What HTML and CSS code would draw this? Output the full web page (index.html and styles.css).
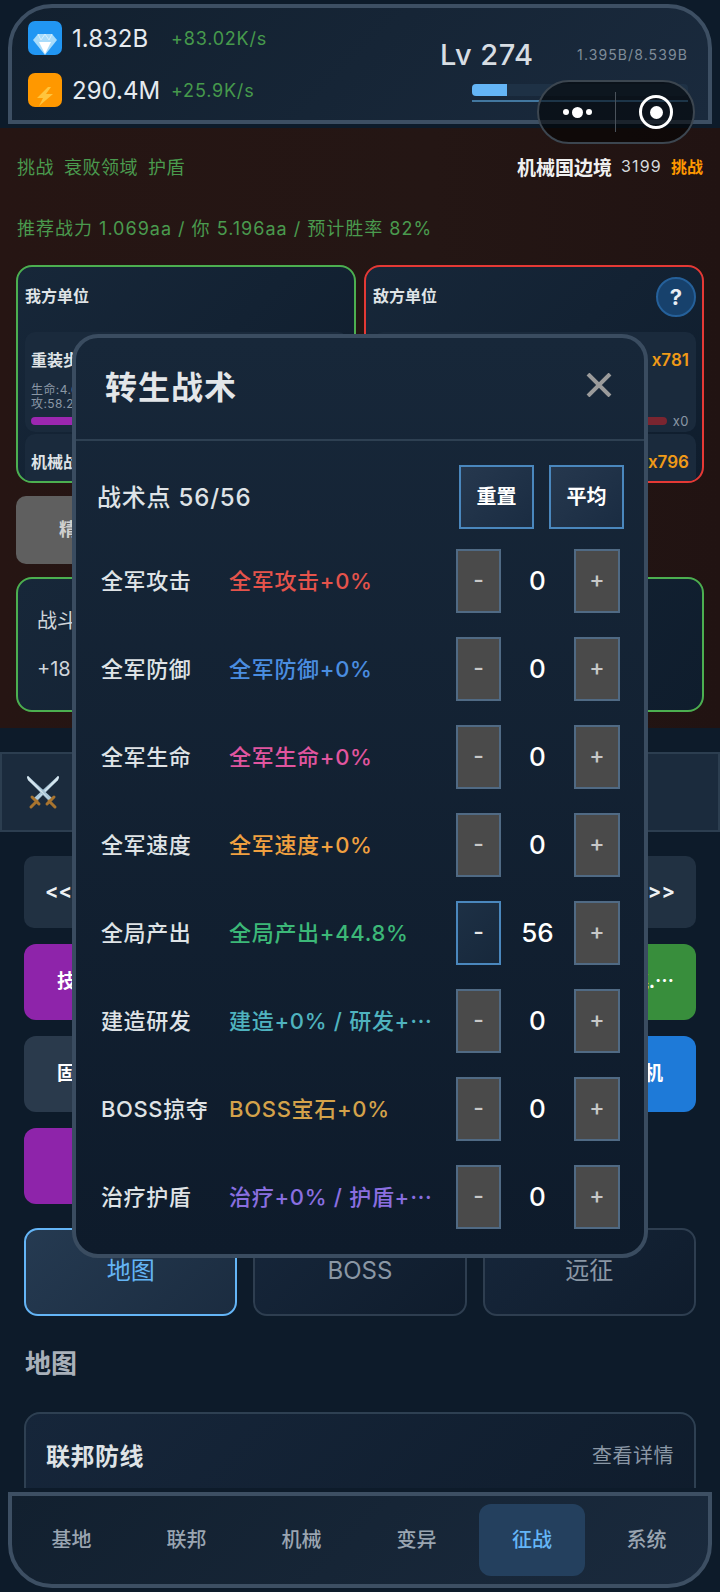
FILE: index.html
```html
<!DOCTYPE html>
<html lang="zh-CN">
<head>
    <meta charset="utf-8">
    <title>转生战术</title>
    <link rel="stylesheet" href="styles.css">
</head>
<body>
<div class="page">
    <header class="top-bar">
        <div class="resources">
            <div class="res-row">
                <span class="res-icon gem">
                    <svg viewBox="0 0 34 34" width="34" height="34">
                        <path d="M5 19 L10 13 L24 13 L29 19 L17 34 Z" fill="#a9dcfb"/>
                        <path d="M11 21 L23 21 L17 33 Z" fill="#ffffff"/>
                        <path d="M10 13 L13 19 L17 13 L21 19 L24 13" fill="none" stroke="#d9f0fd" stroke-width="1"/>
                    </svg>
                </span>
                <span class="res-value">1.832B</span>
                <span class="res-rate">+83.02K/s</span>
            </div>
            <div class="res-row">
                <span class="res-icon bolt">
                    <svg viewBox="0 0 34 34" width="34" height="34">
                        <path d="M20 14 L9 25 L15 25 L11 33 L25 21 L18 21 L23 14 Z" fill="#ffc53d"/>
                    </svg>
                </span>
                <span class="res-value">290.4M</span>
                <span class="res-rate">+25.9K/s</span>
            </div>
        </div>
        <div class="level">
            <div class="level-top">
                <span class="level-num">Lv 274</span>
                <span class="level-xp">1.395B/8.539B</span>
            </div>
            <div class="xp-track"><div class="xp-fill"></div></div>
            <div class="xp-line"></div>
        </div>
    </header>

    <section class="battle">
        <div class="battle-head">
            <div class="tags"><span>挑战</span><span>衰败领域</span><span>护盾</span></div>
            <div class="stage"><b>机械国边境</b><span class="stage-num">3199</span><b class="stage-act">挑战</b></div>
        </div>
        <div class="recommend">推荐战力 1.069aa / 你 5.196aa / 预计胜率 82%</div>
        <div class="sides">
            <div class="side mine">
                <div class="side-title">我方单位</div>
                <div class="unit">
                    <div class="unit-name">重装步兵</div>
                    <div class="unit-stats">生命:4.6aa<br>攻:58.2aa</div>
                    <div class="unit-bar"></div>
                </div>
                <div class="unit unit-short"><div class="unit-name">机械战士</div></div>
            </div>
            <div class="side enemy">
                <div class="side-title">敌方单位</div>
                <div class="help">?</div>
                <div class="unit">
                    <div class="unit-count">x781</div>
                    <div class="enemy-foot"><div class="enemy-bar"></div><span>x0</span></div>
                </div>
                <div class="unit unit-short"><div class="unit-count">x796</div></div>
            </div>
        </div>
        <div class="gray-btn">精英</div>
        <div class="log">
            <div class="log-title">战斗</div>
            <div class="log-line">+18</div>
        </div>
    </section>

    <main class="main">
        <div class="hero-card">
            <svg class="swords" viewBox="0 0 36 36" width="36" height="36">
                <path d="M33 2 L34 3 L33 6 L12 27 L9 24 Z" fill="#a9c6d8"/>
                <path d="M33 2 L34 3 L33 6 L11 26 Z" fill="#d5e5ee"/>
                <path d="M3 2 L2 3 L3 6 L24 27 L27 24 Z" fill="#a9c6d8"/>
                <path d="M3 2 L2 3 L3 6 L25 26 Z" fill="#d5e5ee"/>
                <path d="M7 23 L14 30 M12 27 L6 33" stroke="#a8742f" stroke-width="3" stroke-linecap="round"/>
                <path d="M29 23 L22 30 M24 27 L30 33" stroke="#a8742f" stroke-width="3" stroke-linecap="round"/>
            </svg>
        </div>
        <div class="pager"><span>&lt;&lt;</span><span>&gt;&gt;</span></div>
        <div class="action-row">
            <div class="action purple">技能</div>
            <div class="action green">挑.⋯</div>
        </div>
        <div class="action-row">
            <div class="action slate">固定</div>
            <div class="action blue">战机</div>
        </div>
        <div class="action-row">
            <div class="action purple"></div>
        </div>
        <div class="tabs">
            <div class="tab active">地图</div>
            <div class="tab">BOSS</div>
            <div class="tab">远征</div>
        </div>
        <h2 class="section-title">地图</h2>
        <div class="map-card">
            <span class="map-name">联邦防线</span>
            <span class="map-link">查看详情</span>
        </div>
    </main>

    <nav class="bottom-nav">
        <div class="nav-item">基地</div>
        <div class="nav-item">联邦</div>
        <div class="nav-item">机械</div>
        <div class="nav-item">变异</div>
        <div class="nav-item active">征战</div>
        <div class="nav-item">系统</div>
    </nav>

    <!-- mini program capsule -->
    <div class="capsule">
        <div class="capsule-dots"><i></i><i class="big"></i><i></i></div>
        <div class="capsule-line"></div>
        <div class="capsule-target"><i></i></div>
    </div>

    <div class="modal">
        <div class="modal-head">
            <span class="modal-title">转生战术</span>
            <svg class="modal-close" viewBox="0 0 26 24" width="26" height="24">
                <path d="M2 1 L24 23 M24 1 L2 23" stroke="#9b9b9b" stroke-width="4"/>
            </svg>
        </div>
        <div class="points">
            <span class="points-text">战术点 56/56</span>
            <div class="points-btns">
                <div class="blue-btn">重置</div>
                <div class="blue-btn">平均</div>
            </div>
        </div>
        <div class="tactic">
            <span class="tactic-name">全军攻击</span>
            <span class="tactic-effect c-attack">全军攻击+0%</span>
            <div class="step">-</div><span class="tactic-val">0</span><div class="step plus">+</div>
        </div>
        <div class="tactic">
            <span class="tactic-name">全军防御</span>
            <span class="tactic-effect c-defense">全军防御+0%</span>
            <div class="step">-</div><span class="tactic-val">0</span><div class="step plus">+</div>
        </div>
        <div class="tactic">
            <span class="tactic-name">全军生命</span>
            <span class="tactic-effect c-life">全军生命+0%</span>
            <div class="step">-</div><span class="tactic-val">0</span><div class="step plus">+</div>
        </div>
        <div class="tactic">
            <span class="tactic-name">全军速度</span>
            <span class="tactic-effect c-speed">全军速度+0%</span>
            <div class="step">-</div><span class="tactic-val">0</span><div class="step plus">+</div>
        </div>
        <div class="tactic">
            <span class="tactic-name">全局产出</span>
            <span class="tactic-effect c-output">全局产出+44.8%</span>
            <div class="step on">-</div><span class="tactic-val">56</span><div class="step plus">+</div>
        </div>
        <div class="tactic">
            <span class="tactic-name">建造研发</span>
            <span class="tactic-effect c-build">建造+0% / 研发+⋯</span>
            <div class="step">-</div><span class="tactic-val">0</span><div class="step plus">+</div>
        </div>
        <div class="tactic">
            <span class="tactic-name">BOSS掠夺</span>
            <span class="tactic-effect c-boss">BOSS宝石+0%</span>
            <div class="step">-</div><span class="tactic-val">0</span><div class="step plus">+</div>
        </div>
        <div class="tactic">
            <span class="tactic-name">治疗护盾</span>
            <span class="tactic-effect c-heal">治疗+0% / 护盾+⋯</span>
            <div class="step">-</div><span class="tactic-val">0</span><div class="step plus">+</div>
        </div>
    </div>
</div>
</body>
</html>
```

FILE: styles.css
```css
* {
    box-sizing: border-box;
}
body {
    margin: 0;
    background: #0d1b2a;
    font-family: Inter, "Noto Sans CJK SC", sans-serif;
    color: #e0e6ec;
}
.page {
    position: relative;
    width: 720px;
    height: 1592px;
    display: flex;
    flex-direction: column;
    overflow: hidden;
    background: #0d1b2a;
}

/* top bar */
.top-bar {
    flex: none;
    height: 120px;
    margin: 4px 8px 4px;
    padding: 13px 20px 0 16px;
    display: flex;
    justify-content: space-between;
    border: 4px solid #3d4f63;
    border-radius: 44px 44px 0 0;
    background: linear-gradient(135deg, #12202f, #1a2a3d);
}
.resources {
    display: flex;
    flex-direction: column;
    gap: 18px;
}
.res-row {
    display: flex;
    align-items: center;
    height: 34px;
}
.res-icon {
    width: 34px;
    height: 34px;
    border-radius: 7px;
    overflow: hidden;
}
.res-icon svg {
    display: block;
}
.gem {
    background: #2196f3;
}
.bolt {
    background: #ff9800;
}
.res-value {
    width: 99px;
    margin-left: 10px;
    font-size: 24px;
    color: #e6ebf0;
}
.res-rate {
    font-size: 18px;
    letter-spacing: 0.8px;
    color: #469a4c;
}
.level {
    width: 248px;
    padding-top: 16px;
}
.level-top {
    display: flex;
    justify-content: space-between;
    align-items: center;
}
.level-num {
    font-size: 29px;
    font-weight: 500;
    letter-spacing: 0.5px;
    color: #d7dde3;
}
.level-xp {
    font-size: 14px;
    letter-spacing: 1.1px;
    color: #7f8c99;
}
.xp-track {
    width: 216px;
    height: 12px;
    margin: 12px 0 0 32px;
    border-radius: 4px;
    background: #1e3145;
}
.xp-fill {
    width: 35px;
    height: 12px;
    border-radius: 4px 0 0 4px;
    background: #64b5f6;
}
.xp-line {
    width: 216px;
    height: 2px;
    margin: 4px 0 0 32px;
    background: #42779f;
}

/* battle area */
.battle {
    flex: none;
    height: 600px;
    padding: 0 16px;
    background: linear-gradient(90deg, #261513, #241614 60%, #211312);
}
.battle-head {
    display: flex;
    justify-content: space-between;
    align-items: center;
    height: 24px;
    margin-top: 26px;
}
.tags {
    display: flex;
    gap: 10px;
    margin-left: 1px;
    font-size: 18px;
    letter-spacing: 0.5px;
    color: #4a9a4e;
}
.stage {
    display: flex;
    align-items: center;
    gap: 9px;
    margin-right: 1px;
    font-size: 16px;
    color: #d5d9dc;
}
.stage b:first-child {
    font-size: 19px;
    font-weight: 700;
    color: #f0f0f0;
}
.stage-num {
    letter-spacing: 1.2px;
}
.stage-act {
    color: #ff9800;
}
.recommend {
    margin: 39px 0 0 1px;
    font-size: 18px;
    line-height: 24px;
    letter-spacing: 1px;
    color: #4a9a4e;
}
.sides {
    display: flex;
    gap: 8px;
    margin-top: 24px;
}
.side {
    position: relative;
    width: 340px;
    height: 218px;
    padding: 0 6px 0 7px;
    border: 2px solid;
    border-radius: 16px;
    overflow: hidden;
    background: linear-gradient(135deg, #172739, #0f1d2d);
}
.mine {
    border-color: #4caf50;
}
.enemy {
    border-color: #e53935;
}
.side-title {
    height: 65px;
    padding-top: 17px;
    font-size: 16px;
    font-weight: 700;
    line-height: 24px;
    color: #dfe3e6;
}
.help {
    position: absolute;
    top: 10px;
    right: 6px;
    width: 40px;
    height: 40px;
    border: 2px solid #25609a;
    border-radius: 50%;
    background: #17416c;
    color: #e8eef5;
    font-size: 22px;
    font-weight: 700;
    line-height: 36px;
    text-align: center;
}
.unit {
    height: 100px;
    padding: 15px 7px 0 6px;
    margin-bottom: 2px;
    border-radius: 10px;
    background: #1a2a3c;
}
.unit-short {
    height: 60px;
}
.unit-name {
    font-size: 16px;
    font-weight: 700;
    line-height: 26px;
    color: #dfe3e6;
}
.unit-stats {
    margin-top: 10px;
    font-size: 12px;
    line-height: 14px;
    letter-spacing: 0.4px;
    color: #8a97a5;
}
.unit-bar {
    height: 8px;
    margin-top: 6px;
    border-radius: 4px;
    background: #9c27b0;
}
.unit-count {
    font-size: 17px;
    font-weight: 600;
    line-height: 26px;
    text-align: right;
    color: #f09a17;
}
.enemy-foot {
    display: flex;
    justify-content: space-between;
    align-items: center;
    margin-top: 40px;
    font-size: 13px;
    letter-spacing: 0.5px;
    color: #8a97a5;
}
.enemy-bar {
    width: 288px;
    height: 8px;
    border-radius: 4px;
    background: #7a2530;
}
.gray-btn {
    width: 200px;
    height: 68px;
    margin-top: 13px;
    padding: 0 0 0 43px;
    border-radius: 10px;
    background: #5f5f5f;
    font-size: 18px;
    font-weight: 700;
    line-height: 68px;
    color: #d0d0d0;
}
.log {
    height: 135px;
    margin-top: 13px;
    padding: 26px 19px 0;
    border: 2px solid #4caf50;
    border-radius: 16px;
    background: linear-gradient(135deg, #172739, #0f1d2d);
    font-size: 20px;
    color: #cfd5da;
}
.log-line {
    margin-top: 23px;
}

/* lower page */
.main {
    flex: 1;
    min-height: 0;
    margin-bottom: 4px;
    overflow: hidden;
    padding: 0 24px;
}
.hero-card {
    display: flex;
    align-items: center;
    height: 80px;
    margin: 24px -24px 0;
    padding-left: 23px;
    border: 2px solid #2c3e50;
    background: #1b2b3d;
}
.pager {
    display: flex;
    justify-content: space-between;
    height: 72px;
    margin-top: 24px;
    padding: 0 21px;
    border-radius: 10px;
    background: #213142;
    font-size: 20px;
    font-weight: 700;
    line-height: 70px;
    color: #eef1f4;
}
.action-row {
    display: flex;
    justify-content: space-between;
    margin-top: 16px;
}
.action {
    width: 200px;
    height: 76px;
    padding: 0 33px;
    border-radius: 12px;
    font-size: 19px;
    font-weight: 700;
    line-height: 76px;
    color: #fff;
}
.purple {
    background: #8e24aa;
}
.green {
    background: #388e3c;
    text-align: right;
    padding-right: 22px;
}
.slate {
    background: #2a3a4c;
}
.blue {
    background: #1e7ad8;
    text-align: right;
}
.tabs {
    display: flex;
    gap: 16px;
    margin-top: 24px;
}
.tab {
    flex: 1;
    height: 88px;
    padding-top: 18px;
    border: 2px solid #2e3e50;
    border-radius: 14px;
    background: linear-gradient(135deg, #16263a, #0f1c2c);
    font-size: 24px;
    line-height: 46px;
    text-align: center;
    color: #8a97a5;
}
.tab.active {
    border-color: #64b5f6;
    background: linear-gradient(135deg, #253a51, #1b2c40);
    color: #64b5f6;
}
.section-title {
    margin: 30px 0 0 1px;
    font-size: 26px;
    font-weight: 700;
    line-height: 36px;
    color: #a9b1ba;
}
.map-card {
    display: flex;
    justify-content: space-between;
    align-items: center;
    height: 130px;
    margin-top: 30px;
    padding: 0 20px 46px;
    border: 2px solid #2e4052;
    border-radius: 16px;
    background: linear-gradient(135deg, #16263a, #0f1c2c);
}
.map-name {
    font-size: 24px;
    font-weight: 700;
    letter-spacing: 0.5px;
    color: #dfe3e6;
}
.map-link {
    font-size: 20px;
    letter-spacing: 0.5px;
    color: #8a97a5;
}

/* bottom nav */
.bottom-nav {
    flex: none;
    display: flex;
    height: 96px;
    margin: 0 8px 4px;
    padding: 8px 0 8px 2px;
    border: 4px solid #3d4f63;
    border-radius: 0 0 44px 44px;
    background: linear-gradient(135deg, #12202f, #1a2a3d);
}
.nav-item {
    width: 115px;
    font-size: 20px;
    font-weight: 500;
    line-height: 72px;
    text-align: center;
    color: #9aa5b1;
}
.nav-item.active {
    flex: none;
    width: 106px;
    margin: 0 4px 0 5px;
    border-radius: 12px;
    background: #24405e;
    color: #64b5f6;
}

/* capsule */
.capsule {
    position: absolute;
    top: 80px;
    left: 537px;
    width: 158px;
    height: 64px;
    display: flex;
    align-items: center;
    border: 2px solid #3c4650;
    border-radius: 32px;
    background: rgba(0, 0, 0, 0.55);
}
.capsule-dots {
    flex: none;
    width: 76px;
    display: flex;
    justify-content: center;
    align-items: center;
    gap: 3px;
}
.capsule-dots i {
    width: 6px;
    height: 6px;
    border-radius: 50%;
    background: #fff;
}
.capsule-dots i.big {
    width: 11px;
    height: 11px;
}
.capsule-line {
    width: 1px;
    height: 40px;
    background: #4a525b;
}
.capsule-target {
    width: 34px;
    height: 34px;
    margin-left: 23px;
    display: flex;
    justify-content: center;
    align-items: center;
    border: 3px solid #fff;
    border-radius: 50%;
}
.capsule-target i {
    width: 13px;
    height: 13px;
    border-radius: 50%;
    background: #fff;
}

/* modal */
.modal {
    position: absolute;
    top: 334px;
    left: 72px;
    width: 576px;
    height: 924px;
    border: 4px solid #3a4c60;
    border-radius: 26px;
    background: linear-gradient(180deg, #172739, #0e1b2b);
}
.modal-head {
    display: flex;
    justify-content: space-between;
    align-items: center;
    height: 103px;
    padding: 0 32px 8px 29px;
    border-bottom: 2px solid #2e4052;
}
.modal-title {
    font-size: 32px;
    font-weight: 700;
    letter-spacing: 1px;
    color: #e3e6e9;
}
.points {
    display: flex;
    justify-content: space-between;
    align-items: center;
    margin-top: 24px;
    padding: 0 20px 0 21px;
}
.points-text {
    padding-bottom: 4px;
    font-size: 24px;
    font-weight: 500;
    letter-spacing: 0.8px;
    color: #dfe3e6;
}
.points-btns {
    display: flex;
    gap: 15px;
}
.blue-btn {
    width: 75px;
    height: 64px;
    border: 2px solid #4a87bd;
    background: linear-gradient(135deg, #26384e, #1a2c42);
    font-size: 20px;
    font-weight: 700;
    line-height: 60px;
    text-align: center;
    color: #fff;
}
.tactic {
    display: flex;
    align-items: center;
    height: 64px;
    margin-top: 24px;
    padding-left: 25px;
}
.points + .tactic {
    margin-top: 20px;
}
.tactic-name {
    flex: none;
    width: 128px;
    padding-bottom: 4px;
    font-size: 22px;
    font-weight: 500;
    letter-spacing: 0.6px;
    white-space: nowrap;
    color: #dfe3e6;
}
.tactic-effect {
    flex: none;
    width: 227px;
    padding-bottom: 4px;
    font-size: 22px;
    font-weight: 500;
    letter-spacing: 0.7px;
    white-space: nowrap;
}
.c-attack { color: #e5534b; }
.c-defense { color: #4a8de0; }
.c-life { color: #e0559f; }
.c-speed { color: #f0a040; }
.c-output { color: #3cb878; }
.c-build { color: #4fb3bf; }
.c-boss { color: #d4a24a; }
.c-heal { color: #8a6fe0; }
.step {
    flex: none;
    width: 45px;
    height: 64px;
    border: 2px solid #506a84;
    background: #4a4a4a;
    font-size: 23px;
    font-weight: 500;
    line-height: 58px;
    text-align: center;
    color: #c8c8c8;
}
.step.plus {
    width: 46px;
}
.step.on {
    border-color: #4a87bd;
    background: linear-gradient(135deg, #1d3045, #17283b);
    color: #e6e6e6;
}
.tactic-val {
    flex: none;
    width: 73px;
    padding-bottom: 2px;
    font-size: 26px;
    font-weight: 500;
    text-align: center;
    color: #fff;
}
```
